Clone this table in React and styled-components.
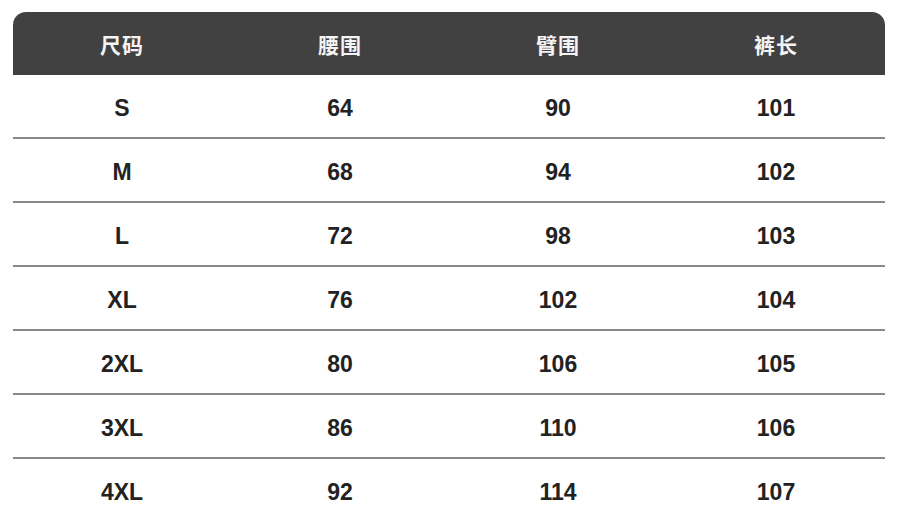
import React from 'react'
import styled, { createGlobalStyle } from 'styled-components'

const rows = [
    ['S', '64', '90', '101'],
    ['M', '68', '94', '102'],
    ['L', '72', '98', '103'],
    ['XL', '76', '102', '104'],
    ['2XL', '80', '106', '105'],
    ['3XL', '86', '110', '106'],
    ['4XL', '92', '114', '107'],
]

const heads = ['尺码', '腰围', '臂围', '裤长']

const App = () => {
    return (
        <>
            <GlobalStyle />
            <Page>
                <Table>
                    <Header>
                        {heads.map(h => <HeadCell key={h}>{h}</HeadCell>)}
                    </Header>
                    {rows.map((r, i) => (
                        <Row key={r[0]} last={i === rows.length - 1}>
                            {r.map((v, j) => <Cell key={j}>{v}</Cell>)}
                        </Row>
                    ))}
                </Table>
            </Page>
        </>
    )
}

export default App

const GlobalStyle = createGlobalStyle`
    body {
        margin: 0;
        background: #fff;
        font-family: "Liberation Sans", Arial, sans-serif;
    }
`;

const Page = styled.div`
    width: 897px;
    height: 528px;
    padding: 12px 0 0 13px;
    box-sizing: border-box;
    overflow: hidden;
`;

const Table = styled.div`
    width: 872px;
    display: flex;
    flex-direction: column;
`;

const Header = styled.div`
    display: grid;
    grid-template-columns: repeat(4, 1fr);
    height: 63px;
    align-items: center;
    background: #414141;
    border-radius: 13px 13px 0 0;
`;

const HeadCell = styled.div`
    text-align: center;
    color: #f4f4f4;
    font-family: "Noto Sans CJK SC", serif;
    font-weight: 700;
    font-size: 21px;
    letter-spacing: 1px;
`;

const Row = styled.div`
    display: grid;
    grid-template-columns: repeat(4, 1fr);
    align-items: center;
    height: 62px;
    border-bottom: 2px solid ${p => (p.last ? 'transparent' : '#8a8a8a')};
`;

const Cell = styled.div`
    text-align: center;
    color: #222;
    font-weight: 700;
    font-size: 23px;
    padding-top: 5px;
`;
